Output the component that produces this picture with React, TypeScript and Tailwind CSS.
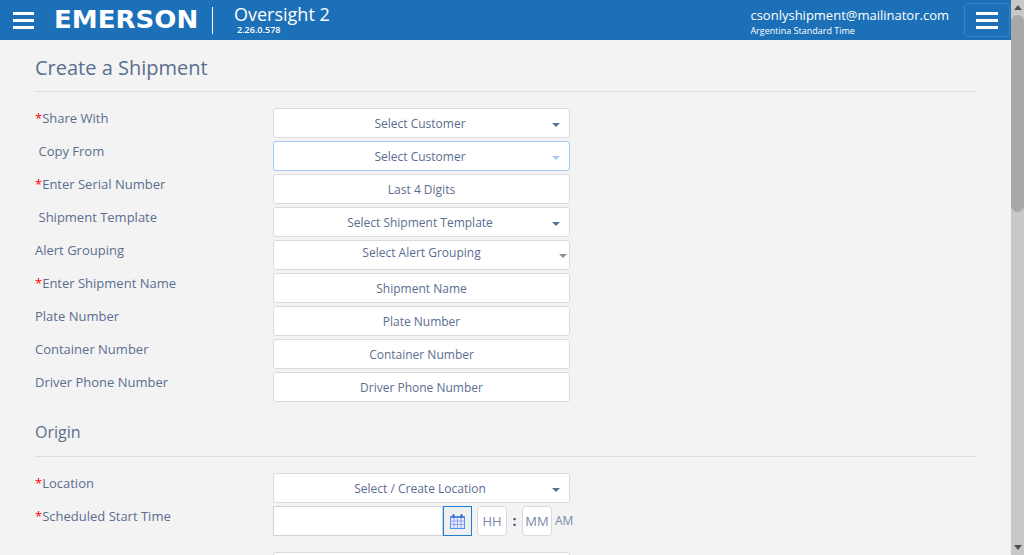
import React from "react";

const Hamburger = ({ className }: { className: string }) => (
  <div className={`flex flex-col justify-between ${className}`}>
    <div className="h-[3px] bg-white" />
    <div className="h-[3px] bg-white" />
    <div className="h-[3px] bg-white" />
  </div>
);

const Caret = ({ color = "border-t-[#5a6f94]" }: { color?: string }) => (
  <span className={`absolute right-[9px] top-[14px] h-0 w-0 border-x-[4px] border-t-[4px] border-x-transparent ${color}`} />
);

const Label = ({ text, required, indent }: { text: string; required?: boolean; indent?: boolean }) => (
  <div className={`w-[238px] shrink-0 pt-[1px] text-[13px] leading-[18px] text-[#5b6e8f] ${indent ? "pl-[3.5px]" : ""}`}>
    {required && <span className="text-[#ff0000]">*</span>}
    {text}
  </div>
);

const Field = ({ text, caret, focus }: { text: string; caret?: boolean; focus?: boolean }) => (
  <div
    className={`relative flex h-[30px] w-[297px] items-center justify-center rounded-[3px] border bg-white pt-[2px] text-[12px] text-[#5b6e8f] ${
      focus ? "border-[#a5c8f5]" : "border-[#d8dbe0]"
    }`}
  >
    <span className={caret ? "pr-[3px]" : ""}>{text}</span>
    {caret && <Caret color={focus ? "border-t-[#a5c8f5]" : "border-t-[#5a6f94]"} />}
  </div>
);

const fields = [
  { label: "Share With", required: true, text: "Select Customer", caret: true },
  { label: "Copy From", indent: true, text: "Select Customer", caret: true, focus: true },
  { label: "Enter Serial Number", required: true, text: "Last 4 Digits" },
  { label: "Shipment Template", indent: true, text: "Select Shipment Template", caret: true },
];

const fieldsBelow = [
  { label: "Enter Shipment Name", required: true, text: "Shipment Name" },
  { label: "Plate Number", text: "Plate Number" },
  { label: "Container Number", text: "Container Number" },
  { label: "Driver Phone Number", text: "Driver Phone Number" },
];

export default function App() {
  return (
    <div className="flex h-[555px] w-[1024px] overflow-hidden bg-[#f3f3f3] font-['Open_Sans',sans-serif]">
      <div className="w-[1011px] shrink-0">
        {/* Header */}
        <header className="flex h-[40px] items-center bg-[#1c70b8] text-white">
          <Hamburger className="ml-[13px] h-[17px] w-[21px]" />
          <div className="ml-[20px] flex w-[158px] items-start">
            <span className="origin-left scale-x-[1.085] font-['DejaVu_Sans',sans-serif] text-[24px] leading-[26px] font-bold">
              EMERSON
            </span>
          </div>
          <div className="h-[27px] w-px bg-white" />
          <div className="ml-[21px] flex flex-col">
            <span className="text-[18px] leading-[20px]">Oversight 2</span>
            <span className="ml-[3px] text-[9px] leading-[12px] font-semibold">2.26.0.578</span>
          </div>
          <div className="ml-auto flex flex-col pt-[3px]">
            <span className="text-[13px] leading-[18px]">csonlyshipment@mailinator.com</span>
            <span className="text-[9px] leading-[13px] font-medium">Argentina Standard Time</span>
          </div>
          <div className="mr-[1px] ml-[15px] flex h-[34px] w-[46px] items-center justify-center rounded-[4px] border border-[#3b83c2]">
            <Hamburger className="h-[17px] w-[22px]" />
          </div>
        </header>

        {/* Form */}
        <main className="pr-[35px] pl-[35px]">
          <h1 className="pt-[14px] text-[20px] leading-[28px] text-[#5b6e8f]">Create a Shipment</h1>
          <hr className="mt-[9px] border-[#dcdcdc]" />

          <div className="mt-[16px] flex flex-col gap-[3px]">
            {fields.map((f) => (
              <div key={f.label + f.text} className="flex">
                <Label text={f.label} required={f.required} indent={f.indent} />
                <Field text={f.text} caret={f.caret} focus={f.focus} />
              </div>
            ))}
            <div className="flex">
              <Label text="Alert Grouping" />
              <div className="relative flex h-[30px] w-[297px] items-start justify-center rounded-[3px] border border-[#d8dbe0] bg-white pt-[3px] text-[12px] leading-[18px] text-[#5b6e8f]">
                Select Alert Grouping
                <span className="absolute top-[13px] right-[2px] h-0 w-0 border-x-[4px] border-t-[4px] border-x-transparent border-t-[#8a8f99]" />
              </div>
            </div>
            {fieldsBelow.map((f) => (
              <div key={f.label} className="flex">
                <Label text={f.label} required={f.required} />
                <Field text={f.text} />
              </div>
            ))}
          </div>

          <h2 className="mt-[19px] text-[16px] leading-[22px] text-[#5b6e8f]">Origin</h2>
          <hr className="mt-[13px] border-[#dcdcdc]" />

          <div className="mt-[16px] flex flex-col gap-[3px]">
            <div className="flex">
              <Label text="Location" required />
              <Field text="Select / Create Location" caret />
            </div>
            <div className="flex">
              <Label text="Scheduled Start Time" required />
              <div className="flex items-center">
                <div className="h-[30px] w-[170px] border border-[#d0d3d9] bg-white" />
                <div className="flex h-[30px] w-[29px] items-center justify-center border border-[#1f7fd0] bg-[#f0f0f0]">
                  <svg width="15" height="15" viewBox="0 0 15 15">
                    <rect x="0.5" y="2.5" width="14" height="12" fill="#ecebff" stroke="#4f8ff0" />
                    <rect x="0" y="2" width="15" height="2" fill="#4f8ff0" />
                    <rect x="2.5" y="0" width="2" height="4" rx="1" fill="#3566b8" />
                    <rect x="10.5" y="0" width="2" height="4" rx="1" fill="#3566b8" />
                    <path d="M4 4v10M7.5 4v10M11 4v10M0 7h15M0 10.5h15" stroke="#8fa8f0" strokeWidth="1" />
                  </svg>
                </div>
                <div className="ml-[5px] flex h-[30px] w-[30px] items-center justify-center rounded-[4px] border border-[#d8dbe0] bg-white pt-[2px] text-[13px] text-[#7d88a8]">
                  HH
                </div>
                <span className="w-[15px] text-center text-[14px] leading-[18px] font-bold text-[#4a5568]">:</span>
                <div className="flex h-[30px] w-[30px] items-center justify-center rounded-[4px] border border-[#d8dbe0] bg-white pt-[2px] text-[13px] text-[#7d88a8]">
                  MM
                </div>
                <span className="ml-[3px] text-[12px] text-[#7d88a8]">AM</span>
              </div>
            </div>
            <div className="mt-[13px] ml-[238px] h-[30px] w-[297px] self-start rounded-[3px] border border-[#d8dbe0] bg-white" />
          </div>
        </main>
      </div>

      {/* Scrollbar */}
      <div className="flex h-[555px] w-[13px] shrink-0 flex-col bg-[#c8c8c8]">
        <div className="flex h-[15px] items-center justify-center">
          <span className="h-0 w-0 border-x-[4px] border-b-[5px] border-x-transparent border-b-[#505050]" />
        </div>
        <div className="h-[197px] rounded-[7px] bg-[#a8a8a8]" />
        <div className="flex-1" />
        <div className="flex h-[15px] items-center justify-center">
          <span className="h-0 w-0 border-x-[4px] border-t-[5px] border-x-transparent border-t-[#505050]" />
        </div>
      </div>
    </div>
  );
}
